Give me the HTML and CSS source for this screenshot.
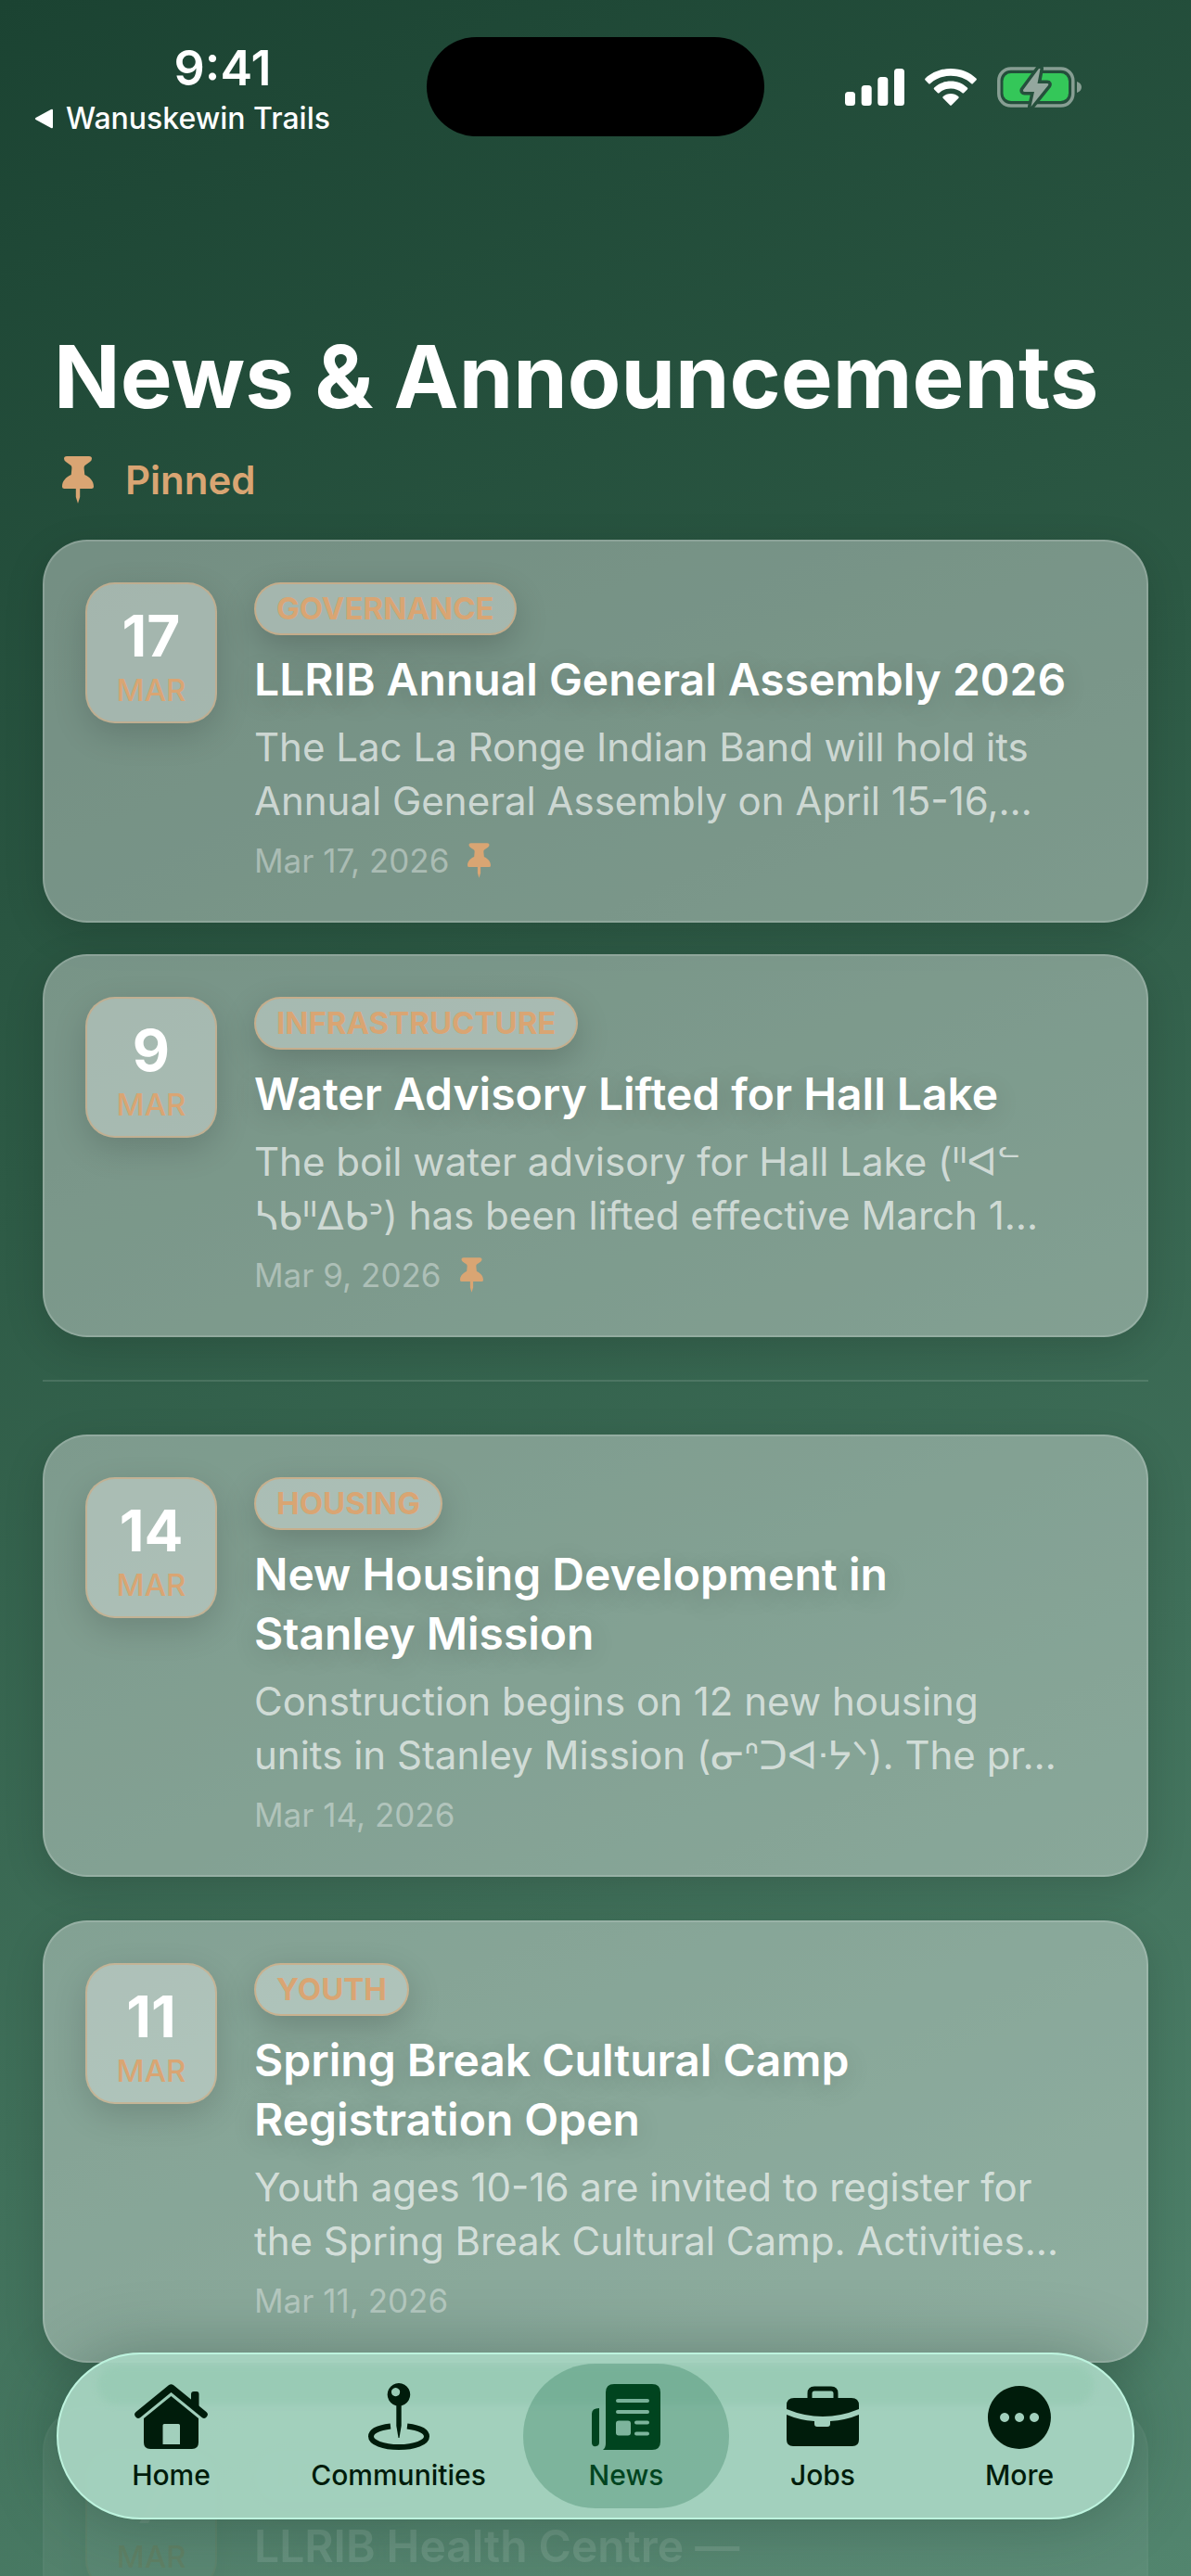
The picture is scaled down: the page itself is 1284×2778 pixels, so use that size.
FILE: index.html
```html
<!DOCTYPE html>
<html lang="en">
<head>
<meta charset="utf-8">
<meta name="viewport" content="width=device-width, initial-scale=1">
<title>News &amp; Announcements</title>
<link rel="stylesheet" href="styles.css">
</head>
<body>
<svg class="defs" aria-hidden="true">
  <symbol id="pin" viewBox="0 0 34 51">
    <path d="M5 0H29Q32 0 32 2.500Q32 4.500 30 6L24.500 10Q23.500 11 23.600 13L24.300 20C30 22.500 34 27 34 32.500Q34 35 31.500 35H19.200V44L17 51L14.800 44V35H2.500Q0 35 0 32.500C0 27 4 22.500 9.700 20L10.400 13Q10.500 11 9.500 10L4 6Q2 4.500 2 2.500Q2 0 5 0Z"/>
  </symbol>
</svg>
<div class="screen">
  <header class="status">
    <div class="status-left">
      <span class="clock">9:41</span>
      <a class="back" href="#"><svg viewBox="0 0 22 22"><path d="M20 2V20Q20 22 18 21L1.500 12Q0 11 1.500 10L18 1Q20 0 20 2Z"/></svg>Wanuskewin Trails</a>
    </div>
    <div class="island"></div>
    <div class="status-right">
      <svg class="signal" viewBox="0 0 64 40"><rect x="0" y="25" width="11" height="15" rx="3.500"/><rect x="17.700" y="18" width="11" height="22" rx="3.500"/><rect x="35.300" y="9" width="11" height="31" rx="3.500"/><rect x="53" y="0" width="11" height="40" rx="3.500"/></svg>
      <svg class="wifi" viewBox="0 0 56 40"><path d="M28 0C39 0 48.500 4 55.400 10.500Q56.400 11.600 55.400 12.600L52 16Q51 17 50 16C44 10.500 36.500 7.800 28 7.800S12 10.500 6 16Q5 17 4 16L.6 12.600Q-.4 11.600 .6 10.500C7.500 4 17 0 28 0Z"/><path d="M28 13.500C35 13.500 41 16 45.800 20.500Q46.800 21.500 45.800 22.500L42.300 26Q41.300 27 40.200 26C36.800 23 32.800 21.500 28 21.500S19.200 23 15.800 26Q14.700 27 13.700 26L10.200 22.500Q9.200 21.500 10.200 20.500C15 16 21 13.500 28 13.500Z"/><path d="M28 27C31.200 27 34 28 36.200 29.900Q37.200 31 36.200 32L29 39.300Q28 40.300 27 39.300L19.800 32Q18.800 31 19.800 29.900C22 28 24.800 27 28 27Z"/></svg>
      <svg class="battery" viewBox="0 0 92 44"><rect x="1.800" y="2" width="80" height="40" rx="13" fill="none" stroke="#879e93" stroke-width="3.500"/><rect x="6.500" y="7" width="70.500" height="30" rx="8.500" fill="#34c759"/><path d="M86 16C89 17 91 19 91 22S89 27 86 28Z" fill="#879e93"/><path d="M45 2L28 25Q27.500 27 29.500 27H40L36.500 43L55 20Q56 18 54 18H43.500L46.500 2Z" fill="#94a79e" stroke="#25503c" stroke-width="7" paint-order="stroke" stroke-linejoin="round"/></svg>
    </div>
  </header>

  <main class="feed">
    <h1 class="title">News &amp; Announcements</h1>
    <h2 class="pinned"><svg class="pin-large"><use href="#pin"/></svg>Pinned</h2>
    <section class="group">
      <article class="card">
        <div class="date"><b>17</b><span>MAR</span></div>
        <div class="info">
          <span class="tag">GOVERNANCE</span>
          <h3>LLRIB Annual General Assembly 2026</h3>
          <p>The Lac La Ronge Indian Band will hold its<br>Annual General Assembly on April 15-16,…</p>
          <time datetime="2026-03-17">Mar 17, 2026<svg class="pin-small"><use href="#pin"/></svg></time>
        </div>
      </article>
      <article class="card">
        <div class="date"><b>9</b><span>MAR</span></div>
        <div class="info">
          <span class="tag">INFRASTRUCTURE</span>
          <h3>Water Advisory Lifted for Hall Lake</h3>
          <p>The boil water advisory for Hall Lake (<span class="cree">ᐦᐊᓪ</span><br><span class="cree">ᓴᑲᐦᐃᑲᐣ</span>) has been lifted effective March 1…</p>
          <time datetime="2026-03-09">Mar 9, 2026<svg class="pin-small"><use href="#pin"/></svg></time>
        </div>
      </article>
    </section>
    <hr>
    <section class="group group-all">
      <article class="card">
        <div class="date"><b>14</b><span>MAR</span></div>
        <div class="info">
          <span class="tag">HOUSING</span>
          <h3>New Housing Development in<br>Stanley Mission</h3>
          <p>Construction begins on 12 new housing<br>units in Stanley Mission (<span class="cree">ᓂᐢᑐᐊᐧᔭᐠ</span>). The pr…</p>
          <time datetime="2026-03-14">Mar 14, 2026</time>
        </div>
      </article>
      <article class="card">
        <div class="date"><b>11</b><span>MAR</span></div>
        <div class="info">
          <span class="tag">YOUTH</span>
          <h3>Spring Break Cultural Camp<br>Registration Open</h3>
          <p>Youth ages 10-16 are invited to register for<br>the Spring Break Cultural Camp. Activities…</p>
          <time datetime="2026-03-11">Mar 11, 2026</time>
        </div>
      </article>
      <article class="card card-fading">
        <div class="date"><b>7</b><span>MAR</span></div>
        <div class="info">
          <span class="tag">HEALTH</span>
          <h3>LLRIB Health Centre —</h3>
        </div>
      </article>
    </section>
  </main>

  <nav class="tabs" aria-label="Main">
    <a class="tab" href="#"><svg viewBox="0 0 80 72"><path d="M4 33L39.500 4L75 33" fill="none" stroke="currentColor" stroke-width="7.500" stroke-linecap="round" stroke-linejoin="round"/><path d="M61 23V11Q61 8 64 8H67Q69.500 8 69.500 11V30Z"/><path fill-rule="evenodd" d="M39.500 13L69 37V63Q69 70 62 70H17Q10 70 10 63V37ZM32 43Q30.500 43 30.500 44.500V65H49V44.500Q49 43 47.500 43Z"/></svg>Home</a>
    <a class="tab" href="#"><svg viewBox="0 0 80 72"><path fill-rule="evenodd" d="M40-1A12.300 12.300 0 1 1 39.900-1ZM36.500 4A4.600 4.600 0 1 0 36.600 4Z"/><path d="M37.300 22H42.700V45L40.500 58H39.500L37.300 45Z"/><path d="M31 45.500C18 47 10 51 10 56.500C10 63 23 68 40 68S70 63 70 56.500C70 51 62 47 49 45.500" fill="none" stroke="currentColor" stroke-width="6"/></svg>Communities</a>
    <a class="tab tab-current" href="#" aria-current="page"><svg viewBox="0 0 80 72"><path d="M8 26V67Q3 68 3 63V32Q3 26 11 26V63Q11 67 7 67Z"/><path fill-rule="evenodd" d="M27 0H68Q77 0 77 9V62Q77 71 68 71H15Q18 69 18 64V9Q18 0 27 0ZM31 16Q29 16 29 18T31 20H63Q65 20 65 18T63 16ZM31 28Q29 28 29 30T31 32H63Q65 32 65 30T63 28ZM32 39.500Q29 39.500 29 42.500V52.500Q29 55.500 32 55.500H42Q45 55.500 45 52.500V42.500Q45 39.500 42 39.500ZM51 39.500Q49 39.500 49 41.500T51 43.500H63Q65 43.500 65 41.500T63 39.500ZM51 51.500Q49 51.500 49 53.500T51 55.500H63Q65 55.500 65 53.500T63 51.500Z"/></svg>News</a>
    <a class="tab" href="#"><svg viewBox="0 0 80 72"><path d="M26 16V10Q26 5 31 5H49Q54 5 54 10V16" fill="none" stroke="currentColor" stroke-width="5"/><path d="M9 15H71Q79 15 79 23V27Q40 43 1 27V23Q1 15 9 15Z"/><path d="M1 33Q15 39 31 40V43Q31 46 34 46H45Q48 46 48 43V40Q65 39 79 33V60Q79 67 72 67H8Q1 67 1 60Z"/></svg>Jobs</a>
    <a class="tab" href="#"><svg viewBox="0 0 80 72"><path fill-rule="evenodd" d="M40 2A34 34 0 1 1 39.900 2ZM24 31A5 5 0 1 0 24.100 31ZM40 31A5 5 0 1 0 40.100 31ZM56 31A5 5 0 1 0 56.100 31Z"/></svg>More</a>
  </nav>
</div>
</body>
</html>
```
FILE: styles.css
```css
* { box-sizing: border-box; }

body, h1, h2, h3, p { margin: 0; }

body {
  font-family: Inter, "Liberation Sans", sans-serif;
  color: #fff;
}

a { color: inherit; text-decoration: none; }
svg { display: block; fill: currentColor; flex: none; }
.defs { position: absolute; width: 0; height: 0; }

.screen {
  position: relative;
  height: 100vh;
  overflow: hidden;
  background: linear-gradient(155deg, #1b4332 0%, #2d5a45 38%, #52856e 100%);
}

/* Status bar */
.status {
  display: grid;
  grid-template-columns: 1fr 364px 1fr;
  padding-top: 40px;
}
.status-left {
  display: flex;
  flex-direction: column;
  padding: 4px 17px 0 37px;
}
.clock {
  align-self: center;
  font-size: 52px;
  line-height: 60px;
  font-weight: 600;
}
.back {
  display: flex;
  align-items: center;
  gap: 12px;
  font-size: 32px;
  line-height: 48px;
  font-weight: 500;
}
.back svg { width: 22px; height: 22px; }
.island { height: 107px; border-radius: 54px; background: #000; }
.status-right {
  display: flex;
  align-items: center;
  align-self: start;
  gap: 22px;
  padding: 32px 0 0 87px;
}
.signal { width: 64px; height: 40px; }
.wifi { width: 56px; height: 40px; }
.battery { width: 92px; height: 44px; }

/* Feed */
.feed { padding: 194px 46px 0; }
.title {
  padding-left: 12px;
  font-size: 94px;
  line-height: 120px;
  font-weight: 700;
}
.pinned {
  display: flex;
  align-items: center;
  gap: 34px;
  height: 116px;
  padding: 0 0 14px 21px;
  font-size: 42px;
  font-weight: 600;
  color: #d9a573;
}
.pin-large { width: 34px; height: 51px; }
.pin-small { width: 25px; height: 38px; color: #d9a573; }

.group { display: flex; flex-direction: column; gap: 34px; }
.group-all { gap: 47px; }
hr {
  height: 2px;
  margin: 46px 0 57px;
  border: 0;
  background: rgba(255, 255, 255, .12);
}

.card {
  display: flex;
  align-items: flex-start;
  gap: 40px;
  padding: 44px;
  border: 2px solid rgba(255, 255, 255, .16);
  border-radius: 48px;
  background: rgba(255, 255, 255, .37);
  box-shadow: 0 12px 44px rgba(0, 0, 0, .14);
}
.date {
  display: flex;
  flex-direction: column;
  align-items: center;
  width: 142px;
  height: 152px;
  padding-top: 18px;
  border: 2px solid rgba(217, 165, 115, .5);
  border-radius: 32px;
  background: rgba(255, 255, 255, .34);
  box-shadow: 0 12px 36px rgba(0, 0, 0, .15);
}
.date b { font-size: 62px; line-height: 76px; font-weight: 700; }
.date span { font-size: 33px; line-height: 40px; font-weight: 500; color: #d9a573; }

.info { display: flex; flex-direction: column; align-items: flex-start; }
.tag {
  padding: 0 22px;
  border: 2px solid rgba(217, 165, 115, .6);
  border-radius: 29px;
  font-size: 33px;
  line-height: 53px;
  font-weight: 700;
  color: #d9a573;
  background: rgba(255, 255, 255, .34);
  box-shadow: 0 12px 36px rgba(0, 0, 0, .18);
}
.card h3 {
  margin-top: 16px;
  font-size: 48px;
  line-height: 64px;
  font-weight: 600;
  text-shadow: 0 6px 28px rgba(0, 0, 0, .16);
}
.card p {
  margin-top: 12px;
  font-size: 42px;
  line-height: 58px;
  color: rgba(255, 255, 255, .65);
}
.cree { font-family: "DejaVu Sans", sans-serif; line-height: 1; }
.card time {
  display: flex;
  align-items: center;
  gap: 20px;
  margin-top: 14px;
  font-size: 35px;
  line-height: 42px;
  color: rgba(255, 255, 255, .38);
}
.card-fading { opacity: .16; box-shadow: none; padding-bottom: 200px; }

/* Floating tab bar */
.tabs {
  position: absolute;
  left: 61px;
  right: 61px;
  bottom: 61px;
  display: grid;
  grid-template-columns: 221fr 269fr 222fr 202fr 222fr;
  padding: 10px 11px;
  border: 2px solid #bdf3de;
  border-radius: 90px;
  background: rgba(167, 212, 193, .94);
  box-shadow: 0 0 70px rgba(20, 50, 38, .34);
  color: #001c0b;
}
.tabs::before {
  content: "";
  position: absolute;
  left: 42px;
  right: 42px;
  top: 12px;
  height: 42px;
  border-radius: 21px;
  background: #99cbb5;
  filter: blur(3px);
}
.tab {
  position: relative;
  display: flex;
  flex-direction: column;
  align-items: center;
  gap: 2px;
  height: 156px;
  padding-top: 22px;
  border-radius: 78px;
  font-size: 30px;
  line-height: 48px;
  font-weight: 500;
}
.tab svg { width: 80px; height: 72px; overflow: visible; }
.tab-current { background: rgba(40, 115, 82, .3); color: #00441f; }
```
